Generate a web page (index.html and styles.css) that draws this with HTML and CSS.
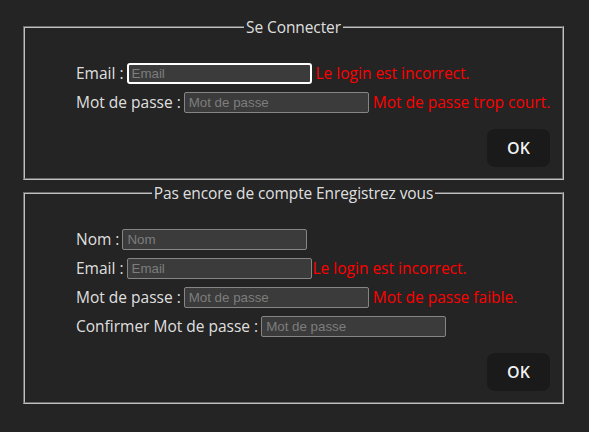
FILE: index.html
```html
<!DOCTYPE html>
<html lang="fr">
<head>
<meta charset="utf-8">
<title>Connexion</title>
<link rel="stylesheet" href="styles.css">
</head>
<body>
<div class="page">
  <form class="panel">
    <fieldset class="box">
      <legend class="box-title">Se Connecter</legend>
      <div class="rows">
        <div class="row">
          <label class="lbl">Email :</label>
          <input class="field field-focus" type="text" placeholder="Email">
          <span class="err">Le login est incorrect.</span>
        </div>
        <div class="row">
          <label class="lbl">Mot de passe :</label>
          <input class="field" type="password" placeholder="Mot de passe">
          <span class="err">Mot de passe trop court.</span>
        </div>
      </div>
      <div class="actions"><button class="btn" type="button">OK</button></div>
    </fieldset>
  </form>
  <form class="panel">
    <fieldset class="box">
      <legend class="box-title">Pas encore de compte Enregistrez vous</legend>
      <div class="rows">
        <div class="row">
          <label class="lbl">Nom :</label>
          <input class="field" type="text" placeholder="Nom">
        </div>
        <div class="row">
          <label class="lbl">Email :</label>
          <input class="field" type="text" placeholder="Email">
          <span class="err err-tight">Le login est incorrect.</span>
        </div>
        <div class="row">
          <label class="lbl">Mot de passe :</label>
          <input class="field" type="password" placeholder="Mot de passe">
          <span class="err">Mot de passe faible.</span>
        </div>
        <div class="row">
          <label class="lbl">Confirmer Mot de passe :</label>
          <input class="field" type="password" placeholder="Mot de passe">
        </div>
      </div>
      <div class="actions"><button class="btn" type="button">OK</button></div>
    </fieldset>
  </form>
</div>
</body>
</html>
```

FILE: styles.css
```css
:root {
  color-scheme: dark;
}
html, body {
  margin: 0;
  background: #242424;
}
body {
  width: 589px;
  height: 432px;
  overflow: hidden;
  font-family: "Open Sans", "Noto Sans", sans-serif;
  font-size: 15.5px;
  color: rgba(255, 255, 255, 0.87);
}
.page {
  padding: 15px 0 0 23px;
}
.panel {
  margin: 0;
}
.panel + .panel {
  margin-top: 1px;
}
.box {
  box-sizing: border-box;
  width: 541px;
  min-width: 0;
  margin: 0;
  padding: 0 12px 11px 12px;
  border: 2px groove rgb(192, 192, 192);
}
.box-title {
  margin: 0 auto;
  padding: 0 2px;
  line-height: 24px;
  height: 24px;
  letter-spacing: -0.1px;
}
.rows {
  display: flex;
  flex-direction: column;
  gap: 5px;
  padding: 22px 0 0 39px;
}
.row {
  display: flex;
  align-items: center;
  height: 24px;
  white-space: nowrap;
}
.lbl {
  margin-right: 3px;
}
.field {
  box-sizing: border-box;
  width: 185px;
  height: 21px;
  padding: 1px 4px;
  margin: 0;
  font-family: "Liberation Sans", Arial, sans-serif;
  font-size: 13.333px;
  color: #fff;
  background: #3b3b3b;
  border: 1px solid #858585;
  border-radius: 2px;
}
.field::placeholder {
  color: #7d7d7d;
}
.field-focus {
  border: 2px solid #ffffff;
  border-radius: 3px;
  padding-left: 3px;
  outline: none;
}
.err {
  margin-left: 4px;
  color: #ff0000;
}
.err-tight {
  margin-left: 1px;
}
.actions {
  display: flex;
  justify-content: flex-end;
  margin-top: 15px;
}
.btn {
  box-sizing: border-box;
  width: 63px;
  height: 38px;
  padding: 0;
  border: 1px solid transparent;
  border-radius: 8px;
  background: #1a1a1a;
  color: rgba(255, 255, 255, 0.95);
  font-family: "Open Sans", "Noto Sans", sans-serif;
  font-size: 16px;
  font-weight: 600;
}
```
